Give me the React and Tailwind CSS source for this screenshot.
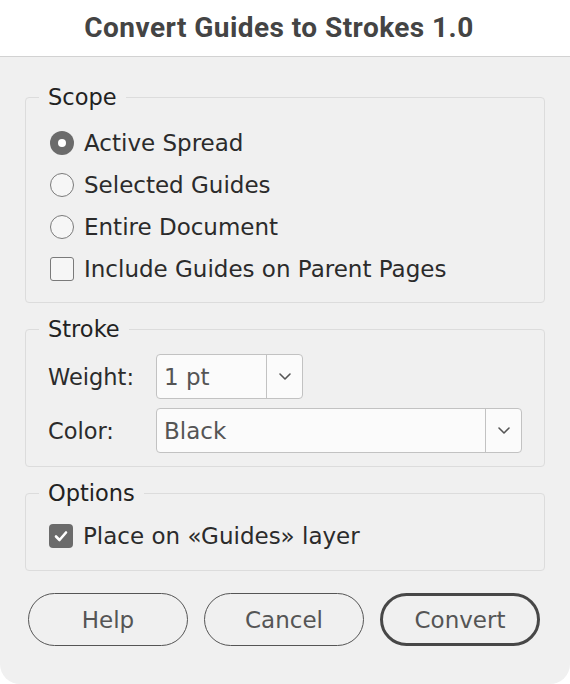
import React from "react";

const body = { fontFamily: '"DejaVu Sans", "Noto Sans", sans-serif' };

function Radio({ checked, label }) {
  return (
    <div className="flex h-[42px] items-center">
      {checked ? (
        <span className="flex h-[24px] w-[24px] items-center justify-center rounded-full bg-[#6b6b6b]">
          <span className="h-[8px] w-[8px] rounded-full bg-white" />
        </span>
      ) : (
        <span className="h-[24px] w-[24px] rounded-full border-[1.5px] border-[#7a7a7a] bg-[#f6f6f6]" />
      )}
      <span className="ml-[10px] text-[23px] leading-[28px] text-[#2b2b2b]">{label}</span>
    </div>
  );
}

function Check({ checked, label }) {
  return (
    <div className="flex h-[42px] items-center">
      {checked ? (
        <span className="flex h-[24px] w-[24px] items-center justify-center rounded-[4px] bg-[#6b6b6b]">
          <svg width="16" height="16" viewBox="0 0 16 16">
            <path d="M3 8.5 L6.5 12 L13 4.5" fill="none" stroke="white" strokeWidth="2.6" strokeLinecap="round" strokeLinejoin="round" />
          </svg>
        </span>
      ) : (
        <span className="h-[24px] w-[24px] rounded-[3px] border-[1.5px] border-[#7a7a7a] bg-[#f6f6f6]" />
      )}
      <span className="ml-[10px] text-[23px] leading-[28px] text-[#2b2b2b]">{label}</span>
    </div>
  );
}

function Chevron() {
  return (
    <svg width="14" height="9" viewBox="0 0 14 9">
      <path d="M2 2 L7 7 L12 2" fill="none" stroke="#555" strokeWidth="1.6" strokeLinecap="round" strokeLinejoin="round" />
    </svg>
  );
}

function Select({ value, width }) {
  return (
    <div className={`flex h-[45px] ${width} rounded-[4px] border-[1.5px] border-[#c2c2c2] bg-[#fbfbfb]`}>
      <div className="flex flex-1 items-center pl-[7px] text-[23px] leading-[28px] text-[#555]">{value}</div>
      <div className="flex w-[36px] items-center justify-center border-l-[1.5px] border-[#c2c2c2]">
        <Chevron />
      </div>
    </div>
  );
}

function Group({ title, children, className = "" }) {
  return (
    <fieldset className={`mx-[25px] rounded-[4px] border-[1.5px] border-[#dcdcdc] pl-[13px] ${className}`}>
      <legend className="px-[9px] text-[22.5px] leading-[28px] text-[#222]">{title}</legend>
      {children}
    </fieldset>
  );
}

function Button({ children, primary }) {
  return (
    <div
      className={`flex h-[53px] w-[160px] items-center justify-center rounded-full text-[23px] leading-[28px] text-[#555] ${
        primary ? "border-[3px] border-[#474747]" : "border-[1.5px] border-[#555]"
      }`}
    >
      {children}
    </div>
  );
}

export default function App() {
  return (
    <div className="h-[684px] w-[570px] bg-white" style={body}>
      <div className="flex h-[57px] items-center justify-center border-b border-[#d2d2d2] bg-white pr-[12px]">
        <span className="text-[28px] font-bold tracking-[0.45px] text-[#444]" style={{ fontFamily: 'Roboto, "Noto Sans", sans-serif' }}>
          Convert Guides to Strokes 1.0
        </span>
      </div>
      <div className="h-[627px] rounded-b-[20px] bg-[#f0f0f0] pt-[26px]">
        <Group title="Scope" className="pb-[12px]">
          <div className="pl-[11px] pt-[11px]">
            <Radio checked label="Active Spread" />
            <Radio label="Selected Guides" />
            <Radio label="Entire Document" />
            <Check label="Include Guides on Parent Pages" />
          </div>
        </Group>
        <Group title="Stroke" className="mt-[12px] pb-[13px]">
          <div className="flex flex-col gap-[9px] pl-[9px] pt-[11px]">
            <div className="flex items-center">
              <span className="w-[108px] text-[22.5px] leading-[28px] text-[#2b2b2b]">Weight:</span>
              <Select value="1 pt" width="w-[147px]" />
            </div>
            <div className="flex items-center">
              <span className="w-[108px] text-[22.5px] leading-[28px] text-[#2b2b2b]">Color:</span>
              <Select value="Black" width="w-[366px]" />
            </div>
          </div>
        </Group>
        <Group title="Options" className="mt-[12px] pb-[13px]">
          <div className="pl-[10px] pt-[8px]">
            <Check checked label="Place on «Guides» layer" />
          </div>
        </Group>
        <div className="mt-[22px] flex gap-[16px] px-[28px]">
          <Button>Help</Button>
          <Button>Cancel</Button>
          <Button primary>Convert</Button>
        </div>
      </div>
    </div>
  );
}
